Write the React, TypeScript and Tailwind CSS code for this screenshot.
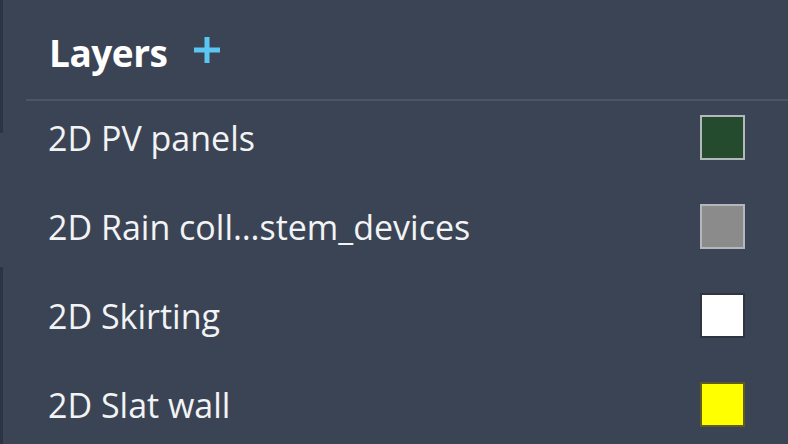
import React from 'react'

type Layer = { name: string; fill: string; edge: string }

const layers: Layer[] = [
  { name: '2D PV panels', fill: 'bg-[#254b2e]', edge: 'border-[#b4b8bc]' },
  { name: '2D Rain coll…stem_devices', fill: 'bg-[#8b8b8b]', edge: 'border-[#b4b8bc]' },
  { name: '2D Skirting', fill: 'bg-white', edge: 'border-[#2e3440]' },
  { name: '2D Slat wall', fill: 'bg-[#ffff00]', edge: 'border-[#5e5c1e]' },
]

export default function App() {
  return (
    <div className="relative h-[444px] w-[788px] overflow-hidden bg-[#3b4454] font-['Open_Sans',sans-serif] text-[#f2f3f5]">
      {/* edge of the neighbouring panel */}
      <div className="absolute left-0 top-0 h-[133px] w-[3px] bg-[#2c3443]" />
      <div className="absolute bottom-0 left-0 h-[177px] w-[3px] bg-[#2c3443]" />

      <div className="flex h-[99px] items-center gap-[25px] pl-[49px] pt-[6px]">
        <h1 className="text-[37px] font-bold tracking-[-0.5px] text-white">Layers</h1>
        <svg width="30" height="30" viewBox="0 0 30 30" className="mb-[6px]">
          <path d="M15 2v26M2 15h26" stroke="#5cc6f2" strokeWidth="5" />
        </svg>
      </div>
      <div className="ml-[26px] h-[2px] bg-[#4b5566]" />

      <ul className="flex flex-col gap-[44px] pt-[14px]">
        {layers.map((l) => (
          <li key={l.name} className="flex h-[45px] items-center justify-between pl-[48px] pr-[43px]">
            <span className="text-[34px] leading-none">{l.name}</span>
            <span className={`h-[45px] w-[45px] border-2 ${l.edge} ${l.fill}`} />
          </li>
        ))}
      </ul>
    </div>
  )
}
